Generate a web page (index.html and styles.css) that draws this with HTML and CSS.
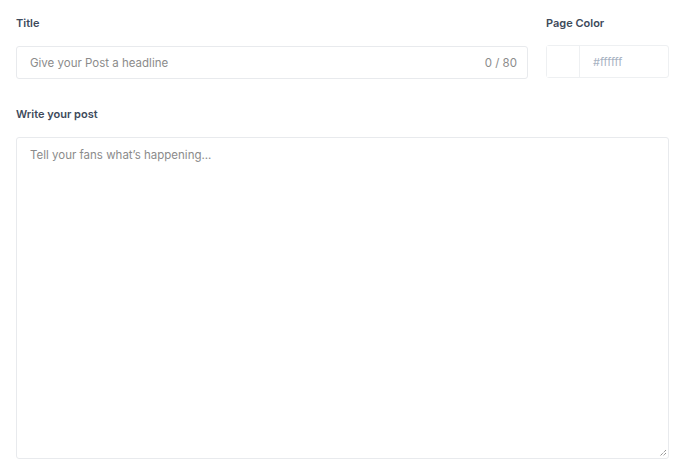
FILE: index.html
```html
<!DOCTYPE html>
<html>
<head>
<meta charset="utf-8">
<link rel="stylesheet" href="styles.css">
</head>
<body>
<div class="page">
  <div class="row">
    <div class="field title-field">
      <label class="label">Title</label>
      <div class="input-box">
        <span class="placeholder">Give your Post a headline</span>
        <span class="counter">0 / 80</span>
      </div>
    </div>
    <div class="field color-field">
      <label class="label">Page Color</label>
      <div class="color-box">
        <span class="swatch"></span>
        <span class="hex">#ffffff</span>
      </div>
    </div>
  </div>
  <div class="field post-field">
    <label class="label">Write your post</label>
    <div class="textarea">
      <span class="placeholder">Tell your fans what’s happening...</span>
      <svg class="grip" width="8" height="8" viewBox="0 0 8 8"><path d="M7 1 L1 7 M7 4 L4 7" stroke="#666" stroke-width="1" stroke-dasharray="1 1"/></svg>
    </div>
  </div>
</div>
</body>
</html>
```
FILE: styles.css
```css
html, body { margin: 0; padding: 0; background: #fff; }
body { font-family: "Inter", "Lato", sans-serif; }
.page { padding: 16px 14px 0 16px; display: flex; flex-direction: column; }
.row { display: flex; gap: 18px; }
.field { display: flex; flex-direction: column; }
.title-field { width: 512px; }
.color-field { width: 123px; }
.label { font-size: 11px; font-weight: 600; color: #3d4a5b; line-height: 14px; margin-bottom: 16px; }
.input-box { height: 31px; border: 1px solid #e8eaed; border-radius: 3px; display: flex; align-items: center; justify-content: space-between; padding: 0 10px 0 13px; }
.placeholder { font-size: 11.5px; color: #8b8b8b; }
.counter { font-size: 11.5px; color: #8b8b8b; }
.color-box { height: 31px; margin-top: -1px; border: 1px solid #eef0f2; border-radius: 3px; display: flex; }
.swatch { width: 32px; border-right: 1px solid #eef0f2; background: #fff; }
.hex { font-size: 11px; color: #a7b2c2; display: flex; align-items: center; padding-left: 13px; }
.post-field { margin-top: 28px; }
.post-field .label { margin-bottom: 16px; }
.textarea { position: relative; border: 1px solid #e8eaed; border-radius: 3px; padding: 5px 13px; box-sizing: border-box; height: 322px; }
.grip { position: absolute; right: 1px; bottom: 1px; }
```
